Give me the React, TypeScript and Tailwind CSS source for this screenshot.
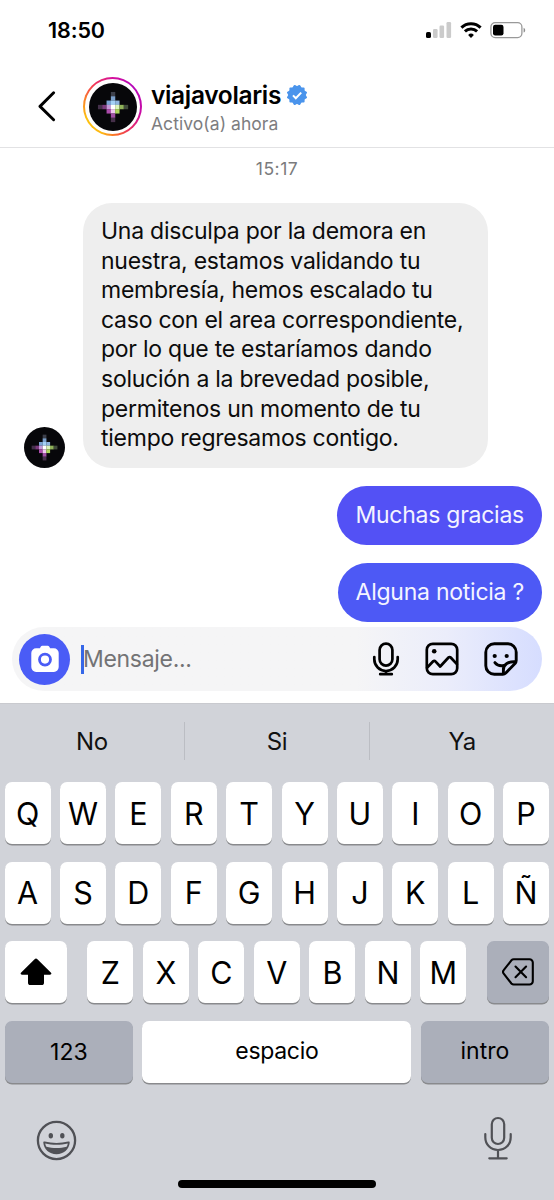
import type { ReactNode } from 'react';

// 7x7 pixel star, one entry per lit cell: [col, row, color]
const STAR_PIXELS: [number, number, string][] = [
  [3, 0, '#3c3f4a'],
  [3, 1, '#7b9fca'],
  [2, 2, '#7ba3d4'],
  [3, 2, '#a3d0f5'],
  [4, 2, '#8fb4df'],
  [0, 3, '#44304a'],
  [1, 3, '#7b3a7d'],
  [2, 3, '#c598d8'],
  [3, 3, '#ffffff'],
  [4, 3, '#dcf3bd'],
  [5, 3, '#8fb259'],
  [6, 3, '#3f4a3a'],
  [2, 4, '#ac4bab'],
  [3, 4, '#efcaef'],
  [4, 4, '#abd65a'],
  [3, 5, '#a04fa3'],
  [3, 6, '#46304a'],
];

function VolarisAvatar({ className }: { className: string }) {
  return (
    <svg viewBox="0 0 48 48" className={className}>
      <circle cx="24" cy="24" r="24" fill="#07070a" />
      {STAR_PIXELS.map(([col, row, color]) => (
        <rect key={`${col}-${row}`} x={8.95 + col * 4.3} y={8.95 + row * 4.3} width="4.4" height="4.4" fill={color} />
      ))}
    </svg>
  );
}

function StatusBar() {
  return (
    <div className="flex h-[62px] items-start justify-between pl-[48px] pr-[28px]">
      <span className="mt-[16px] text-[21.5px] leading-[28px] font-semibold tracking-[-0.1px]">18:50</span>
      <div className="mt-[21px] flex items-center">
        <svg width="26" height="18" viewBox="0 0 26 18">
          <rect x="0" y="11" width="5" height="6" rx="1.6" fill="#000" />
          <rect x="7" y="8" width="4.6" height="9" rx="1.2" fill="#cbcbcb" />
          <rect x="13.5" y="4.5" width="4.6" height="12.5" rx="1.2" fill="#cbcbcb" />
          <rect x="20.5" y="1" width="4.6" height="16" rx="1.2" fill="#cbcbcb" />
        </svg>
        <svg width="22" height="18" viewBox="0 0 22 18" fill="none" stroke="#000" strokeWidth="3" className="ml-[8px]">
          <path d="M1.4 6.6a13.8 13.8 0 0 1 19.2 0" />
          <path d="M4.9 10.4a8.8 8.8 0 0 1 12.2 0" />
          <path d="M11 17l-2.9-3.1a4.2 4.2 0 0 1 5.8 0z" fill="#000" stroke="none" />
        </svg>
        <svg width="36" height="18" viewBox="0 0 36 18" className="ml-[8px]">
          <rect x="0.9" y="1.6" width="31" height="15" rx="4.3" fill="none" stroke="#999" strokeWidth="1.3" />
          <rect x="3" y="3.7" width="10.5" height="10.8" rx="2.2" fill="#000" />
          <path d="M33.6 6.8v4.8c1.1-.5 1.6-1.4 1.6-2.4s-.5-1.9-1.6-2.4z" fill="#8f8f8f" />
        </svg>
      </div>
    </div>
  );
}

function ChatHeader() {
  return (
    <header className="flex h-[86px] items-start border-b border-[#e2e2e4]">
      <svg width="18" height="32" viewBox="0 0 18 32" fill="none" className="mt-[28px] ml-[38px]">
        <path d="M15.6 2.8L2 16.4l13.6 13.4" stroke="#000" strokeWidth="2.9" strokeLinecap="round" strokeLinejoin="round" />
      </svg>
      <div className="mt-[15px] ml-[27px] flex size-[59px] items-center justify-center rounded-full bg-[conic-gradient(from_0deg,#d5109c,#b507b9_12%,#c80aa6_28%,#ea2f60_40%,#f9622f_47%,#fdb713_56%,#fdc20f_68%,#fb8a25_78%,#f43b50_88%,#d5109c)]">
        <div className="flex size-[55px] items-center justify-center rounded-full bg-white">
          <VolarisAvatar className="size-[48px]" />
        </div>
      </div>
      <div className="mt-[17px] ml-[9px]">
        <div className="flex items-center">
          <span className="text-[24.5px] leading-[32px] font-semibold tracking-[-0.34px]">viajavolaris</span>
          <svg width="22" height="22" viewBox="-11 -11 22 22" className="ml-[5px]">
            <g fill="#4a94ec">
              <rect x="-7.6" y="-7.6" width="15.2" height="15.2" rx="1" />
              <rect x="-7.6" y="-7.6" width="15.2" height="15.2" rx="1" transform="rotate(30)" />
              <rect x="-7.6" y="-7.6" width="15.2" height="15.2" rx="1" transform="rotate(60)" />
            </g>
            <path d="M-4 .4l2.8 2.9L4.2-2.4" fill="none" stroke="#fff" strokeWidth="2" />
          </svg>
        </div>
        <div className="mt-px text-[17.5px] leading-[24px] tracking-[0.05px] text-[#7d7d7f]">Activo(a) ahora</div>
      </div>
    </header>
  );
}

function SentBubble({ color, children }: { color: string; children: ReactNode }) {
  return <div className={`flex h-[59px] items-center rounded-full px-[18px] text-[23px] tracking-[-0.25px] text-[#f4f4ff] ${color}`}>{children}</div>;
}

function Messages() {
  return (
    <main className="flex h-[479px] flex-col">
      <div className="mt-[10px] text-center text-[17.5px] leading-[22px] tracking-[0.5px] text-[#7b7b7d]">15:17</div>
      <div className="mt-[23px] flex items-end pl-[24px]">
        <VolarisAvatar className="size-[41px]" />
        <div className="ml-[18px] h-[265px] w-[405px] rounded-[29px] bg-[#eeeeee] pt-[14px] pl-[18px] text-[23px] leading-[29.6px] whitespace-nowrap text-[#0c0c0c]">
          <p className="tracking-[-0.25px]">
            Una disculpa por la demora en
            <br />
            nuestra, estamos validando tu
            <br />
            membresía, hemos escalado tu
            <br />
            caso con el area correspondiente,
            <br />
            por lo que te estaríamos dando
            <br />
            solución a la brevedad posible,
            <br />
            permitenos un momento de tu
            <br />
            tiempo regresamos contigo.
          </p>
        </div>
      </div>
      <div className="mt-[18px] flex flex-col items-end gap-[18px] pr-[12px]">
        <SentBubble color="bg-[#5351f5]">Muchas gracias</SentBubble>
        <SentBubble color="bg-[#4d59f5]">Alguna noticia ?</SentBubble>
      </div>
    </main>
  );
}

function Composer() {
  return (
    <div className="mx-[12px] flex h-[64px] items-center rounded-full bg-linear-to-r from-[#f5f5f6] from-65% via-[#ebedfb] via-82% to-[#d6ddff] pl-[7px]">
      <div className="flex size-[51px] items-center justify-center rounded-full bg-[#4a5cf6]">
        <svg width="28" height="28" viewBox="0 0 28 28">
          <path d="M9.4 2.3C10 1.2 10.8.8 12 .8h4c1.2 0 2 .4 2.6 1.5l.5 1h3.8a4.8 4.8 0 0 1 4.8 4.8v14a4.8 4.8 0 0 1-4.8 4.8H5.1A4.8 4.8 0 0 1 .3 22.1v-14A4.8 4.8 0 0 1 5.1 3.3h3.8z" fill="#fff" />
          <circle cx="14" cy="14.6" r="5.5" fill="none" stroke="#4a5cf6" strokeWidth="2.8" />
        </svg>
      </div>
      <div className="ml-[11px] h-[29px] w-[3px] bg-[#3567e8]" />
      <span className="-ml-px text-[23px] tracking-[-0.3px] text-[#737375]">Mensaje...</span>
      <div className="mr-[24px] ml-auto flex items-center text-black">
        <svg width="28" height="34" viewBox="0 0 28 34" fill="none" stroke="currentColor" strokeWidth="2.7" strokeLinecap="round">
          <rect x="7.6" y="1.6" width="12.8" height="22" rx="6.4" />
          <path d="M2.3 15v2.3a11.7 11.7 0 0 0 23.4 0V15M14 29v3M8.2 32.2h11.6" />
        </svg>
        <svg width="34" height="34" viewBox="0 0 34 34" fill="none" stroke="currentColor" strokeWidth="2.7" strokeLinecap="round" strokeLinejoin="round" className="ml-[25px]">
          <rect x="1.8" y="1.8" width="30.4" height="30.4" rx="6" />
          <path d="M2.2 25.5l6-6.2a1.5 1.5 0 0 1 2.2 0l4.8 5.2 8.3-9a1.5 1.5 0 0 1 2.2 0l6.2 6.6" />
          <circle cx="9.2" cy="9.2" r="2.3" fill="currentColor" stroke="none" />
        </svg>
        <svg width="34" height="34" viewBox="0 0 34 34" fill="none" stroke="currentColor" strokeWidth="2.9" strokeLinecap="round" strokeLinejoin="round" className="ml-[25px]">
          <path d="M18.8 32.2H10.3a8.5 8.5 0 0 1-8.5-8.5V10.3a8.5 8.5 0 0 1 8.5-8.5h13.4a8.5 8.5 0 0 1 8.5 8.5v8.2c0 1.2-.4 2.1-1.2 3L21.8 31a4.3 4.3 0 0 1-3 1.2z" />
          <path d="M19.4 31.5v-3.6c0-2.8 1.2-5 3.4-6.4 2.2-1.3 5-1.9 8.700-1.700" />
          <path d="M10.900 20.600c2 2.500 5.200 3.800 9.100 2.900" />
          <circle cx="10.7" cy="14" r="2.1" fill="currentColor" stroke="none" />
          <circle cx="22.7" cy="14" r="2.1" fill="currentColor" stroke="none" />
        </svg>
      </div>
    </div>
  );
}

function LetterKey({ letter }: { letter: string }) {
  return (
    <div className="flex h-[62px] w-[46px] items-center justify-center rounded-[7px] bg-white pt-px text-[30.5px] text-black shadow-[0_1.5px_0_#898a8d]">
      {letter}
    </div>
  );
}

function Keyboard() {
  return (
    <section className="mt-[12px] flex h-[497px] flex-col border-t border-[#c9cacf] bg-[#d1d3d9]">
      <div className="mt-[18px] flex h-[38px] items-center text-center text-[24px] tracking-[-0.3px] text-[#111]">
        <span className="flex-1 pt-[2px]">No</span>
        <span className="h-full w-[1.5px] bg-[#bbbdc3]" />
        <span className="flex-1 pt-[2px]">Si</span>
        <span className="h-full w-[1.5px] bg-[#bbbdc3]" />
        <span className="flex-1 pt-[2px]">Ya</span>
      </div>

      <div className="mt-[22px] flex flex-col gap-[17.7px] pr-[4.8px] pl-[4.6px]">
        <div className="flex justify-between">
          {[...'QWERTYUIOP'].map((l) => (
            <LetterKey key={l} letter={l} />
          ))}
        </div>
        <div className="flex justify-between">
          {[...'ASDFGHJKLÑ'].map((l) => (
            <LetterKey key={l} letter={l} />
          ))}
        </div>
        <div className="flex justify-between">
          <div className="flex h-[62px] w-[62px] items-center justify-center rounded-[7px] bg-white shadow-[0_1.5px_0_#898a8d]">
            <svg width="32" height="28" viewBox="0 0 32 28">
              <path d="M14.6 1.2a2 2 0 0 1 2.8 0L30.8 14.4c1 1 .6 2.3-.8 2.3h-6v8c0 1.6-.8 2.4-2.4 2.4H10.4c-1.6 0-2.4-.8-2.4-2.4v-8H2c-1.4 0-1.8-1.3-.8-2.3z" fill="#000" />
            </svg>
          </div>
          <div className="flex gap-[9.5px]">
            {[...'ZXCVBNM'].map((l) => (
              <LetterKey key={l} letter={l} />
            ))}
          </div>
          <div className="flex h-[62px] w-[62px] items-center justify-center rounded-[7px] bg-[#abafba] shadow-[0_1.5px_0_#898a8d]">
            <svg width="32" height="28" viewBox="0 0 32 28" fill="none" stroke="#000" strokeWidth="2.1" strokeLinecap="round" strokeLinejoin="round">
              <path d="M11.8 1.3H27.5a3.3 3.3 0 0 1 3.3 3.3v18.6a3.3 3.3 0 0 1-3.3 3.3H11.8a3.3 3.3 0 0 1-2.4-1L1.7 15.6a2.4 2.4 0 0 1 0-3.4L9.4 2.3a3.3 3.3 0 0 1 2.4-1z" />
              <path d="M13.5 8.6l10.6 10.6M24.1 8.6L13.5 19.2" />
            </svg>
          </div>
        </div>
        <div className="flex h-[62px] justify-between text-[23px] text-black">
          <div className="flex w-[128.5px] items-center justify-center rounded-[7px] bg-[#abafba] shadow-[0_1.5px_0_#898a8d]">123</div>
          <div className="flex w-[269px] items-center justify-center rounded-[7px] bg-white pb-[2px] tracking-[-0.3px] shadow-[0_1.5px_0_#898a8d]">espacio</div>
          <div className="flex w-[128.5px] items-center justify-center rounded-[7px] bg-[#abafba] pb-[2px] shadow-[0_1.5px_0_#898a8d]">intro</div>
        </div>
      </div>

      <div className="mt-[33px] flex items-start justify-between pr-[41px] pl-[36px] text-[#505156]">
        <svg width="41" height="41" viewBox="0 0 41 41" className="mt-[4px]">
          <circle cx="20.5" cy="20.5" r="18.6" fill="none" stroke="currentColor" strokeWidth="2.3" />
          <ellipse cx="14.8" cy="15.8" rx="2.2" ry="2.7" fill="currentColor" />
          <ellipse cx="26.3" cy="15.8" rx="2.2" ry="2.7" fill="currentColor" />
          <path d="M8.8 21.6c-1-.3-1.600.2-1.500 1.200.6 6.500 6 11.400 13.200 11.400s12.600-4.900 13.200-11.400c.1-1-.5-1.500-1.500-1.200-7.200 1.700-16.200 1.700-23.400 0z" fill="currentColor" />
          <path d="M9.2 23.400c7 1.700 15.600 1.700 22.600 0-.2 1.300-.6 2.400-1.200 3.300-6.200 1.700-14 1.700-20.200 0-.6-.9-1-2-1.200-3.300z" fill="#d1d3d9" />
        </svg>
        <svg width="30" height="44" viewBox="0 0 30 44" fill="none" stroke="currentColor" strokeWidth="2.2" strokeLinecap="round">
          <rect x="8.8" y="2" width="12.4" height="26" rx="6.2" />
          <path d="M2.3 18v3.3C2.3 28.5 7.6 34 15 34s12.7-5.5 12.7-12.7V18M15 34v8M6.3 42.3h17.4" />
        </svg>
      </div>

      <div className="mt-auto mb-[12px] h-[8px] w-[198px] self-center rounded-full bg-black" />
    </section>
  );
}

export default function App() {
  return (
    <div className="h-[1200px] w-[554px] overflow-hidden bg-white font-['Inter','Liberation_Sans',sans-serif] text-black">
      <StatusBar />
      <ChatHeader />
      <Messages />
      <Composer />
      <Keyboard />
    </div>
  );
}
